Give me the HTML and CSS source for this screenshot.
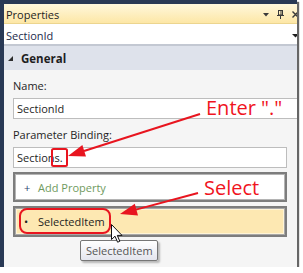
FILE: index.html
```html
<!DOCTYPE html>
<html lang="en">
<head>
  <meta charset="UTF-8" />
  <meta name="viewport" content="width=device-width, initial-scale=1.0"/>
  <title>Properties</title>
  <link rel="stylesheet" href="styles.css">
</head>
<body>

  <div class="frame">
    <div class="panel">
      <div class="titlebar">
        <span class="title">Properties</span>
        <span class="title-tools">
          <svg width="6" height="4" viewBox="0 0 6 4"><polygon points="0,0 6,0 3,3.5" fill="#3a3a3a"/></svg>
          <svg width="7" height="9" viewBox="0 0 7 9">
            <rect x="1.5" y="0.5" width="4" height="4.5" fill="none" stroke="#3a3a3a"/>
            <line x1="4" y1="0.5" x2="4" y2="5" stroke="#3a3a3a"/>
            <line x1="0" y1="5.5" x2="7" y2="5.5" stroke="#3a3a3a"/>
            <line x1="3.5" y1="5.5" x2="3.5" y2="9" stroke="#3a3a3a"/>
          </svg>
          <svg width="7" height="7" viewBox="0 0 7 7">
            <path d="M0.5 0.5 L6.5 6.5 M6.5 0.5 L0.5 6.5" stroke="#3a3a3a" stroke-width="1.4"/>
          </svg>
        </span>
      </div>

      <div class="combo">
        <span class="combo-text">SectionId</span>
        <svg width="7" height="4" viewBox="0 0 7 4"><polygon points="0,0 7,0 3.5,3.5" fill="#1e1e1e"/></svg>
      </div>

      <div class="group-header">
        <svg width="5" height="5" viewBox="0 0 5 5"><polygon points="5,0 5,5 0,5" fill="#2d2d2d"/></svg>
        <span>General</span>
      </div>

      <div class="group-body">
        <div class="field-label">Name:</div>
        <div class="textbox textbox-wide">SectionId</div>

        <div class="field-label field-label-gap">Parameter Binding:</div>
        <div class="textbox">Sections.</div>

        <div class="list-item list-add"><span class="glyph">+</span>Add Property</div>
        <div class="list-item list-selected"><span class="glyph">&bull;</span>SelectedItem</div>
      </div>
    </div>

    <!-- anotações por cima da captura -->
    <svg class="notes" width="303" height="273" viewBox="0 0 303 273">
      <rect x="52" y="149" width="15" height="17" rx="1.5" fill="none" stroke="#e8151f" stroke-width="2"/>
      <rect x="20" y="209" width="90" height="24" rx="7" fill="none" stroke="#e8151f" stroke-width="2"/>
      <line x1="200" y1="114" x2="84" y2="151" stroke="#e8151f" stroke-width="2"/>
      <polygon points="68,156 86,156.6 82.4,145.1" fill="#e8151f"/>
      <line x1="198" y1="193" x2="136" y2="209.6" stroke="#e8151f" stroke-width="2"/>
      <polygon points="120,214 138,215.4 134.8,203.8" fill="#e8151f"/>
    </svg>
    <div class="note note-enter">Enter "."</div>
    <div class="note note-select">Select</div>

    <div class="tooltip">SelectedItem</div>
    <svg class="cursor" width="13" height="20" viewBox="0 0 13 20">
      <path d="M0.5 0.5 L0.5 15.5 L4 12.2 L6.6 18.2 L8.8 17.3 L6.3 11.4 L11 11.4 Z" fill="#fff" stroke="#111" stroke-width="1" stroke-linejoin="round"/>
    </svg>
  </div>

</body>
</html>
```

FILE: styles.css
```css
* {
  box-sizing: border-box;
  margin: 0;
  padding: 0;
}

body {
  background-color: #fff;
  font-family: "Open Sans", "Noto Sans", sans-serif;
  font-size: 11px;
  color: #1e1e1e;
}

.frame {
  position: relative;
  width: 297px;
  height: 267px;
  padding: 4px 0 0 4px;
  background-color: #293955;
  box-shadow: 2px 2px 1px rgba(0, 0, 0, 0.6);
}

.panel {
  width: 100%;
  height: 100%;
  background-color: #f5f5f5;
  display: flex;
  flex-direction: column;
  overflow: hidden;
}

.titlebar {
  height: 20px;
  padding: 2px 0 0 2px;
  display: flex;
  align-items: center;
  background: linear-gradient(#fff7dc, #fde7a6);
  border-bottom: 1px solid #ecd58f;
}

.title {
  flex: 1;
  line-height: 15px;
}

.title-tools {
  display: flex;
  align-items: center;
  gap: 8px;
  margin-right: -2px;
}

.title-tools svg {
  display: block;
}

.combo {
  height: 22px;
  padding: 4px 0 0 2px;
  display: flex;
  align-items: flex-start;
  background-color: #fff;
  border-bottom: 2px solid #c3c8d2;
}

.combo-text {
  flex: 1;
  line-height: 15px;
  color: #1b2b4b;
}

.combo svg {
  margin: 6px -2px 0 0;
}

.group-header {
  height: 24px;
  padding-left: 4px;
  display: flex;
  align-items: center;
  gap: 8px;
  background-color: #dee2eb;
  font-weight: bold;
  font-size: 11.5px;
}

.group-body {
  padding: 8px 0 0 9px;
}

.field-label {
  line-height: 15px;
  margin-bottom: 5px;
}

.field-label-gap {
  margin-top: 8px;
}

.textbox {
  width: 274px;
  height: 21px;
  padding-left: 3px;
  line-height: 19px;
  background-color: #fff;
  border: 1px solid #bdbdbd;
}

.textbox-wide {
  width: 286px;
}

.list-item {
  width: 274px;
  margin-top: 4px;
  padding-left: 9px;
  display: flex;
  align-items: center;
  border: 2px solid #7d7d7d;
  box-shadow: inset 0 0 0 1px #b4b4b4;
}

.glyph {
  width: 14px;
}

.list-add {
  height: 30px;
  background-color: #fff;
  color: #6f9a5e;
}

.list-add .glyph {
  color: #2a4470;
}

.list-selected {
  height: 31px;
  background-color: #fde8b2;
  box-shadow: inset 0 0 0 1px #a8a8a8, inset 0 0 0 2px #fff4d6;
}

.notes {
  position: absolute;
  left: 0;
  top: 0;
  pointer-events: none;
}

.note {
  position: absolute;
  font-size: 20px;
  line-height: 20px;
  color: #f0141e;
  white-space: nowrap;
}

.note-enter {
  left: 206px;
  top: 98px;
}

.note-select {
  left: 204px;
  top: 178px;
}

.tooltip {
  position: absolute;
  left: 80px;
  top: 240px;
  width: 78px;
  height: 21px;
  padding-left: 5px;
  line-height: 19px;
  color: #555;
  background: linear-gradient(#ffffff, #e4e5ee);
  border: 1px solid #767676;
  border-radius: 2px;
  box-shadow: 2px 2px 2px rgba(0, 0, 0, 0.25);
}

.cursor {
  position: absolute;
  left: 111px;
  top: 224px;
}
```
